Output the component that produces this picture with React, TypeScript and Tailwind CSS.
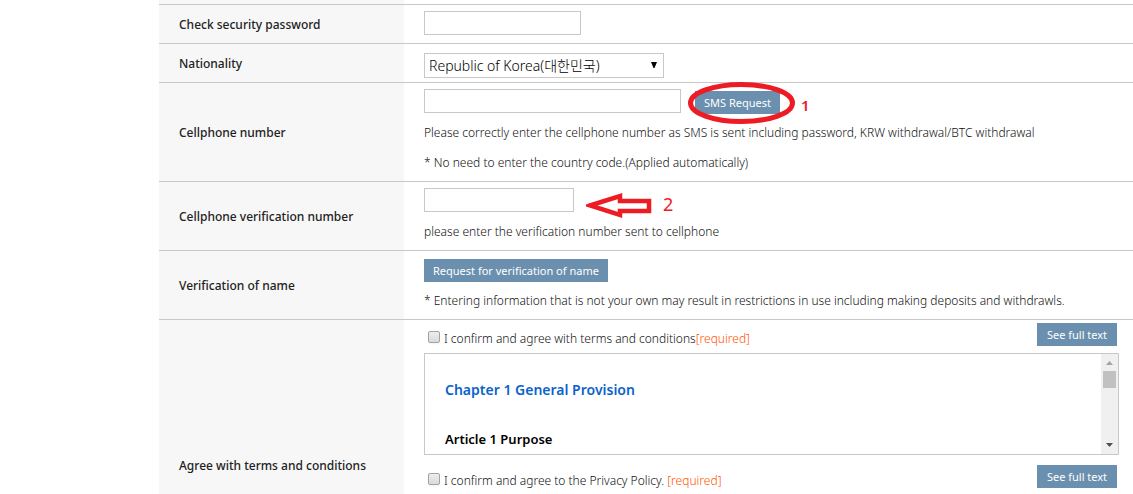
import type { ReactNode } from "react";

const field = "h-6 border border-[#c8c8c8] bg-white px-1 text-[13px] text-black outline-none";
const note = "text-[12px] leading-[30px] font-light text-[#111]";

function ActionButton({ children }: { children: ReactNode }) {
  return (
    <button type="button" className="block h-[23px] min-w-20 shrink-0 bg-[#6b8fae] px-[9px] text-[11px] leading-[23px] whitespace-nowrap text-white">
      {children}
    </button>
  );
}

type RowProps = { label: string; htmlFor?: string; className: string; last?: boolean; children: ReactNode };

function Row({ label, htmlFor, className, last, children }: RowProps) {
  const labelBox = last ? "items-start pt-[136px]" : "items-center pt-0.5";
  return (
    <div className={`flex border-t border-[#c8c8c8] ${last ? "flex-1" : ""}`}>
      <div className={`flex w-[245px] shrink-0 bg-[#f7f7f7] pl-5 ${labelBox}`}>
        <label htmlFor={htmlFor} className="text-[12px] leading-5 font-medium whitespace-nowrap text-[#222]">
          {label}
        </label>
      </div>
      <div className={`min-w-0 flex-1 pl-5 ${className}`}>{children}</div>
    </div>
  );
}

function Required() {
  return <span className="text-[#ff5500]">[required]</span>;
}

function Agreement({ id, children }: { id: string; children: ReactNode }) {
  return (
    <div className="flex items-start justify-between pr-0.5">
      <div className="flex items-center pt-1.5 pl-1">
        <input
          id={id}
          type="checkbox"
          className="mb-1 h-3 w-3 appearance-none rounded-[2px] border border-[#a3a3a3] bg-linear-to-b from-[#ededed] to-[#dadada] shadow-xs"
        />
        <label htmlFor={id} className="pl-1 text-[12px] leading-5 font-light text-[#111]">
          {children}
        </label>
      </div>
      <ActionButton>See full text</ActionButton>
    </div>
  );
}

function ScrollTrack() {
  return (
    <div className="flex w-[17px] shrink-0 flex-col items-center bg-[#f0f0f0]" aria-hidden="true">
      <svg width="17" height="17" viewBox="0 0 17 17">
        <path d="M5 11 L8.5 7 L12 11 Z" fill="#a3a3a3" />
      </svg>
      <div className="h-[17px] w-[13px] bg-[#c1c1c1]" />
      <svg className="mt-auto" width="17" height="17" viewBox="0 0 17 17">
        <path d="M5 6 L8.5 10 L12 6 Z" fill="#505050" />
      </svg>
    </div>
  );
}

export default function App() {
  return (
    <form className="flex min-h-screen flex-col bg-white pl-[159px] font-['Noto_Sans','Noto_Sans_CJK_KR',sans-serif]">
      <div className="h-1 w-[245px] bg-[#f7f7f7]" />

      <Row label="Check security password" htmlFor="password-check" className="pt-1.5 pb-2">
        <input id="password-check" type="password" className={`${field} block w-[157px]`} />
      </Row>

      <Row label="Nationality" htmlFor="nationality" className="pt-[9px] pb-1">
        <div className="relative w-60">
          <select
            id="nationality"
            className="block h-[25px] w-full appearance-none border border-[#c8c8c8] bg-white pl-1 text-[14px] font-light text-black outline-none"
          >
            <option>Republic of Korea(대한민국)</option>
          </select>
          <svg className="pointer-events-none absolute top-2 right-1.5" width="8" height="8" viewBox="0 0 8 8">
            <path d="M1 1 H7 L4.5 7 H3.5 Z" fill="#000" />
          </svg>
        </div>
      </Row>

      <Row label="Cellphone number" htmlFor="cellphone" className="pt-1.5 pb-[3px]">
        <div className="flex items-start pb-1">
          <input id="cellphone" type="tel" className={`${field} w-[257px]`} />
          <div className="relative ml-3.5 pt-0.5">
            <ActionButton>SMS Request</ActionButton>
            <svg className="pointer-events-none absolute -top-2 -left-2" width="110" height="44" viewBox="0 0 110 44">
              <ellipse cx="54.500" cy="22" rx="51" ry="18.500" fill="none" stroke="#ed1c24" strokeWidth="5" />
            </svg>
            <span className="absolute top-1.5 left-[106px] text-[15px] leading-5 font-semibold text-[#ed1c24]">1</span>
          </div>
        </div>
        <p className={note}>
          Please correctly enter the cellphone number as SMS is sent including password, KRW withdrawal/BTC withdrawal
        </p>
        <p className={note}>* No need to enter the country code.(Applied automatically)</p>
      </Row>

      <Row label="Cellphone verification number" htmlFor="sms-code" className="pt-1.5 pb-[3px]">
        <div className="relative w-[150px]">
          <input id="sms-code" type="text" className={`${field} block w-full`} />
          <svg className="pointer-events-none absolute top-1 left-[162px]" width="66" height="28" viewBox="0 0 66 28">
            <path d="M4 13.500 L34 4 V9 H63 V19 H34 V23 Z" fill="#fff" stroke="#ed1c24" strokeWidth="4.500" />
          </svg>
          <span className="absolute top-1 left-[239px] text-[18px] leading-6 text-[#ed1c24]">2</span>
        </div>
        <p className={`${note} pt-[5px]`}>please enter the verification number sent to cellphone</p>
      </Row>

      <Row label="Verification of name" className="pt-2 pb-[3px]">
        <ActionButton>Request for verification of name</ActionButton>
        <p className={`${note} pt-1`}>
          * Entering information that is not your own may result in restrictions in use including making deposits and withdrawls.
        </p>
      </Row>

      <Row label="Agree with terms and conditions" className="pt-[3px] pr-3.5" last>
        <Agreement id="agree-terms">
          I confirm and agree with terms and conditions<Required />
        </Agreement>
        <div className="mt-1 mb-2.5 flex h-[102px] border border-[#c8c8c8]">
          <div className="min-w-0 flex-1 overflow-hidden px-5 pt-6">
            <h2 className="text-[14px] leading-6 font-semibold text-[#0b62cc]">Chapter 1 General Provision</h2>
            <h3 className="mt-[25px] text-[13px] leading-6 font-semibold text-black">Article 1 Purpose</h3>
          </div>
          <ScrollTrack />
        </div>
        <Agreement id="agree-privacy">
          I confirm and agree to the Privacy Policy. <Required />
        </Agreement>
      </Row>
    </form>
  );
}
